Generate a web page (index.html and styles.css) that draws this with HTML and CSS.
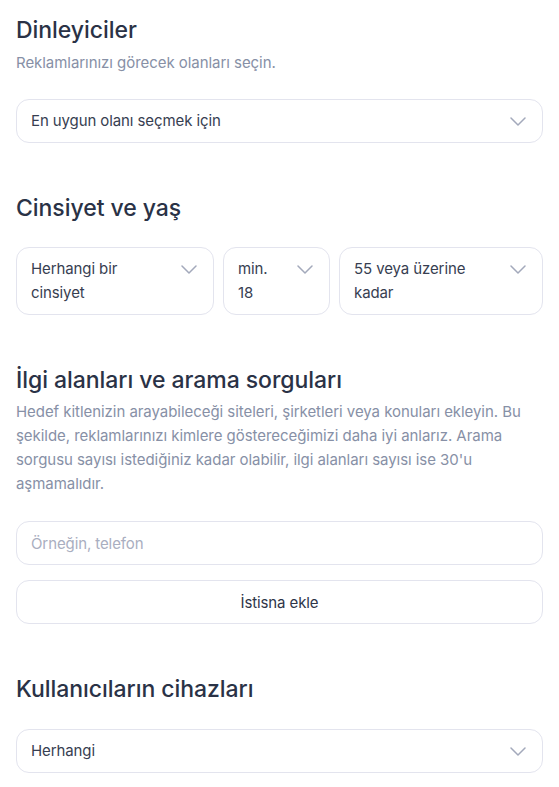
FILE: index.html
```html
<!DOCTYPE html>
<html lang="tr">
<head>
<meta charset="utf-8">
<link rel="stylesheet" href="styles.css">
</head>
<body>
<main class="page">
  <section class="section">
    <h2 class="title">Dinleyiciler</h2>
    <p class="hint">Reklamlarınızı görecek olanları seçin.</p>
    <div class="select select-wide">
      <span class="value">En uygun olanı seçmek için</span>
      <svg class="chev" viewBox="0 0 16 9" width="16" height="9"><path d="M1 1l7 7 7-7" fill="none" stroke="currentColor" stroke-width="1.5" stroke-linecap="round" stroke-linejoin="round"/></svg>
    </div>
  </section>

  <section class="section">
    <h2 class="title">Cinsiyet ve yaş</h2>
    <div class="trio">
      <div class="select select-tall">
        <span class="value">Herhangi bir<br>cinsiyet</span>
        <svg class="chev" viewBox="0 0 16 9" width="16" height="9"><path d="M1 1l7 7 7-7" fill="none" stroke="currentColor" stroke-width="1.5" stroke-linecap="round" stroke-linejoin="round"/></svg>
      </div>
      <div class="select select-tall">
        <span class="value">min.<br>18</span>
        <svg class="chev" viewBox="0 0 16 9" width="16" height="9"><path d="M1 1l7 7 7-7" fill="none" stroke="currentColor" stroke-width="1.5" stroke-linecap="round" stroke-linejoin="round"/></svg>
      </div>
      <div class="select select-tall">
        <span class="value">55 veya üzerine<br>kadar</span>
        <svg class="chev" viewBox="0 0 16 9" width="16" height="9"><path d="M1 1l7 7 7-7" fill="none" stroke="currentColor" stroke-width="1.5" stroke-linecap="round" stroke-linejoin="round"/></svg>
      </div>
    </div>
  </section>

  <section class="section">
    <h2 class="title">İlgi alanları ve arama sorguları</h2>
    <p class="hint hint-long">Hedef kitlenizin arayabileceği siteleri, şirketleri veya konuları ekleyin. Bu şekilde, reklamlarınızı kimlere göstereceğimizi daha iyi anlarız. Arama sorgusu sayısı istediğiniz kadar olabilir, ilgi alanları sayısı ise 30'u aşmamalıdır.</p>
    <div class="field">
      <span class="placeholder">Örneğin, telefon</span>
    </div>
    <button class="btn" type="button">İstisna ekle</button>
  </section>

  <section class="section">
    <h2 class="title">Kullanıcıların cihazları</h2>
    <div class="select select-wide select-last">
      <span class="value">Herhangi</span>
      <svg class="chev" viewBox="0 0 16 9" width="16" height="9"><path d="M1 1l7 7 7-7" fill="none" stroke="currentColor" stroke-width="1.5" stroke-linecap="round" stroke-linejoin="round"/></svg>
    </div>
  </section>
</main>
</body>
</html>
```

FILE: styles.css
```css
* { box-sizing: border-box; }

html, body {
  margin: 0;
  padding: 0;
  background: #ffffff;
}

body {
  font-family: Inter, "Noto Sans", "Liberation Sans", sans-serif;
  color: #2b3346;
  -webkit-font-smoothing: antialiased;
}

.page {
  padding: 14px 16px 0 16px;
  display: flex;
  flex-direction: column;
}

.section {
  display: flex;
  flex-direction: column;
}

.title {
  margin: 0;
  font-size: 23px;
  line-height: 32px;
  font-weight: 500;
  color: #2a3246;
  letter-spacing: -0.05px;
}

.hint {
  margin: 5px 0 0 0;
  font-size: 15px;
  line-height: 24px;
  color: #8790a6;
  letter-spacing: -0.05px;
}

.select {
  border: 1px solid #e3e4ee;
  border-radius: 13px;
  display: flex;
  align-items: flex-start;
  justify-content: space-between;
  padding: 9px 16px 9px 14px;
  font-size: 15px;
  line-height: 24px;
  color: #373e51;
  letter-spacing: -0.1px;
  background: #fff;
}

.select-wide {
  margin-top: 24px;
  height: 44px;
  align-items: center;
}

.select-last { margin-top: 24px; }

.chev {
  flex: none;
  color: #a3a9bb;
  margin-top: 8px;
}

.select-wide .chev { margin-top: 0; }

.section + .section { margin-top: 49px; }

.trio {
  margin-top: 23px;
  display: grid;
  grid-template-columns: 198fr 107fr 204fr;
  gap: 9px;
}

.select-tall {
  height: 68px;
  padding-top: 9px;
}

.hint-long { margin-top: 4px; }

.field {
  margin-top: 25px;
  height: 44px;
  border: 1px solid #e3e4ee;
  border-radius: 13px;
  display: flex;
  align-items: center;
  padding: 0 14px;
  font-size: 15px;
  letter-spacing: -0.1px;
}

.placeholder { color: #a9aec0; }

.btn {
  margin-top: 15px;
  height: 44px;
  border: 1px solid #e3e4ee;
  border-radius: 13px;
  background: #fff;
  font-family: inherit;
  font-size: 15px;
  letter-spacing: -0.1px;
  color: #2e3548;
  padding: 0;
}
```
